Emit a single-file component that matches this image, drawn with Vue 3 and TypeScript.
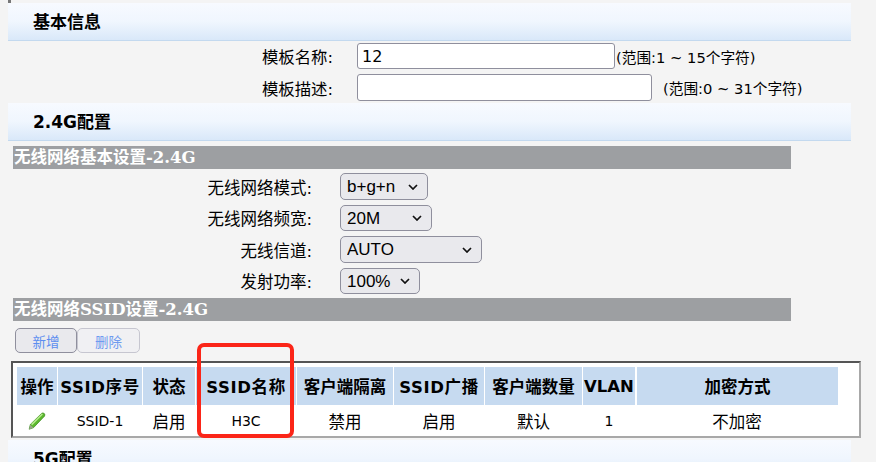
<script setup lang="ts">
interface Field {
  label: string
  value: string
  cls: string
}

const fields: Field[] = [
  { label: '无线网络模式:', value: 'b+g+n', cls: 'w-mode' },
  { label: '无线网络频宽:', value: '20M', cls: 'w-band' },
  { label: '无线信道:', value: 'AUTO', cls: 'w-chan' },
  { label: '发射功率:', value: '100%', cls: 'w-power' },
]

const heads = ['操作', 'SSID序号', '状态', 'SSID名称', '客户端隔离', 'SSID广播', '客户端数量', 'VLAN', '加密方式']
const cells = ['SSID-1', '启用', 'H3C', '禁用', '启用', '默认', '1', '不加密']
</script>

<template>
  <div class="page">
    <div class="top-mark"></div>
    <div class="section">
      <h3>基本信息</h3>
    </div>
    <div class="tpl-row first">
      <label>模板名称:</label>
      <input class="name-input" value="12" />
      <span class="hint">(范围:1 ~ 15个字符)</span>
    </div>
    <div class="tpl-row">
      <label>模板描述:</label>
      <input class="desc-input" />
      <span class="hint far">(范围:0 ~ 31个字符)</span>
    </div>

    <div class="section">
      <h3>2.4G配置</h3>
    </div>
    <div class="bar basic">无线网络基本设置-2.4G</div>
    <div class="fields">
      <div v-for="f in fields" :key="f.label" class="field">
        <label>{{ f.label }}</label>
        <select :class="f.cls">
          <option>{{ f.value }}</option>
        </select>
      </div>
    </div>
    <div class="bar">无线网络SSID设置-2.4G</div>
    <div class="buttons">
      <button class="pressed">新增</button>
      <button class="off">删除</button>
    </div>

    <div class="table-box">
      <div class="grid">
        <div v-for="h in heads" :key="h" class="th">{{ h }}</div>
        <div class="td">
          <svg width="20" height="20" viewBox="0 0 20 20">
            <path d="M2.2 18.2 L3.4 13.4 L14.6 2.4 Q16 1.4 17.3 2.6 Q18.4 3.9 17.4 5.2 L6.6 16.6 Z" fill="#5cb82e" stroke="#3f8f22" stroke-width="0.8" />
            <path d="M4.6 13.6 L15.4 3" stroke="#b5ea8c" stroke-width="1.6" fill="none" />
            <path d="M2.2 18.2 L3.3 13.8 L6.4 16.7 Z" fill="#9aa58c" />
          </svg>
        </div>
        <div v-for="(c, i) in cells" :key="i" class="td" :class="{ lat: i === 0 || i === 2 || i === 6 }">{{ c }}</div>
      </div>
      <div class="red-box"></div>
    </div>

    <div class="section last">
      <h3>5G配置</h3>
    </div>
  </div>
</template>

<style>
html,
body {
  margin: 0;
  background: #f4f4f4;
  overflow: hidden;
}
</style>

<style scoped>
.page {
  position: relative;
  width: 876px;
  height: 462px;
  overflow: hidden;
  padding: 3px 0 0 8px;
  box-sizing: border-box;
  background: #f4f4f4;
  color: #000;
  font-family: "DejaVu Sans", "Noto Sans CJK SC", sans-serif;
  font-size: 16px;
}

.top-mark {
  position: absolute;
  left: 8px;
  top: 0;
  width: 3px;
  height: 3px;
  background: #777;
}

.section {
  width: 843px;
  height: 38px;
  box-sizing: border-box;
  border-bottom: 1px solid #c3d9ef;
  background: linear-gradient(#f7faff, #f0f6fe 50%, #d9e8f9);
  padding: 1px 0 0 25px;
}

.section h3 {
  margin: 0;
  font-size: 17px;
  line-height: 37px;
  font-weight: 700;
  color: #000;
}

.tpl-row {
  display: flex;
  align-items: center;
  height: 27px;
  margin-top: 5px;
}

.tpl-row.first {
  height: 26px;
  margin-top: 2px;
}

.tpl-row + .section {
  margin-top: 2px;
}

.tpl-row label {
  width: 325px;
  text-align: right;
  margin-right: 24px;
  font-size: 16.4px;
  white-space: nowrap;
}

.tpl-row input {
  box-sizing: border-box;
  height: 100%;
  border: 1px solid #8f8f9d;
  border-radius: 3px;
  background: #fff;
  padding: 0 4px;
  font: 16px "DejaVu Sans", sans-serif;
  color: #000;
  outline: none;
}

.name-input {
  width: 258px;
}

.desc-input {
  width: 295px;
}

.hint {
  font-size: 14.7px;
  margin-left: 1px;
  white-space: nowrap;
}

.hint.far {
  margin-left: 11px;
}

.bar {
  width: 778px;
  height: 23px;
  margin-left: 5px;
  box-sizing: border-box;
  padding-left: 1px;
  background: #9d9fa2;
  color: #fff;
  font-family: "DejaVu Serif", "Noto Sans CJK SC", serif;
  font-weight: 700;
  font-size: 16.5px;
  line-height: 23px;
  white-space: nowrap;
}

.bar.basic {
  margin-top: 5px;
}

.fields {
  display: flex;
  flex-direction: column;
  gap: 5px;
  padding: 4px 0;
}

.field {
  display: flex;
  align-items: center;
  height: 27px;
}

.field:nth-child(even) {
  height: 26px;
}

.field label {
  width: 304px;
  text-align: right;
  margin-right: 28px;
  font-size: 16.5px;
  white-space: nowrap;
}

.field select {
  box-sizing: border-box;
  height: 100%;
  appearance: none;
  border: 1px solid #8f8f9d;
  border-radius: 5px;
  background: #e9e9ed url("data:image/svg+xml,%3Csvg xmlns='http://www.w3.org/2000/svg' width='10' height='6'%3E%3Cpath d='M1 1l4 4 4-4' fill='none' stroke='%23111' stroke-width='1.7'/%3E%3C/svg%3E") no-repeat right 9px center;
  padding: 0 2px 0 6px;
  font: 17px "Liberation Sans", sans-serif;
  color: #000;
}

.w-mode {
  width: 88px;
}

.w-band {
  width: 92px;
}

.w-chan {
  width: 142px;
}

.w-power {
  width: 80px;
}

.buttons {
  display: flex;
  margin: 7px 0 0 7px;
  height: 25px;
}

.buttons button {
  box-sizing: border-box;
  height: 100%;
  width: 62px;
  padding: 0;
  border: 1px solid #b4b4c0;
  border-radius: 5px;
  background: #eeeef2;
  color: #5b8df0;
  font-family: "Noto Sans CJK SC", sans-serif;
  font-size: 13.5px;
}

.buttons .pressed {
  border-color: #8f8f9d;
  background: #e9e9ed;
}

.buttons .off {
  width: 63px;
  color: #6f9af0;
  background: #f0f0f3;
  border-color: #c6c6d0;
}

.table-box {
  position: relative;
  width: 850px;
  height: 77px;
  box-sizing: border-box;
  margin: 8px 0 0 3px;
  padding: 4px 0 0 4px;
  background: #fff;
  border: 2px solid;
  border-color: #555 #a8a8a8 #a8a8a8 #555;
}

.grid {
  display: grid;
  grid-template-columns: 40px 84px 52px 100px 96px 90px 97px 52px 202px;
  grid-template-rows: 38px 31px;
  column-gap: 1px;
}

.th {
  display: flex;
  align-items: center;
  justify-content: center;
  background: #c6daf0;
  font-size: 16.5px;
  font-weight: 700;
  color: #000;
  white-space: nowrap;
}

.th:nth-child(2),
.th:nth-child(4),
.th:nth-child(6) {
  letter-spacing: 0.6px;
}

.th:nth-child(9) {
  margin-left: 1px;
}

.td {
  display: flex;
  align-items: center;
  justify-content: center;
  background: #fff;
  font-size: 16.5px;
  white-space: nowrap;
}

.td.lat {
  font-size: 14px;
}

.red-box {
  position: absolute;
  left: 184px;
  top: -20px;
  width: 97px;
  height: 95px;
  box-sizing: border-box;
  border: 4px solid #fb2518;
  border-radius: 7px;
}

.section.last {
  margin-top: 2px;
}
</style>
